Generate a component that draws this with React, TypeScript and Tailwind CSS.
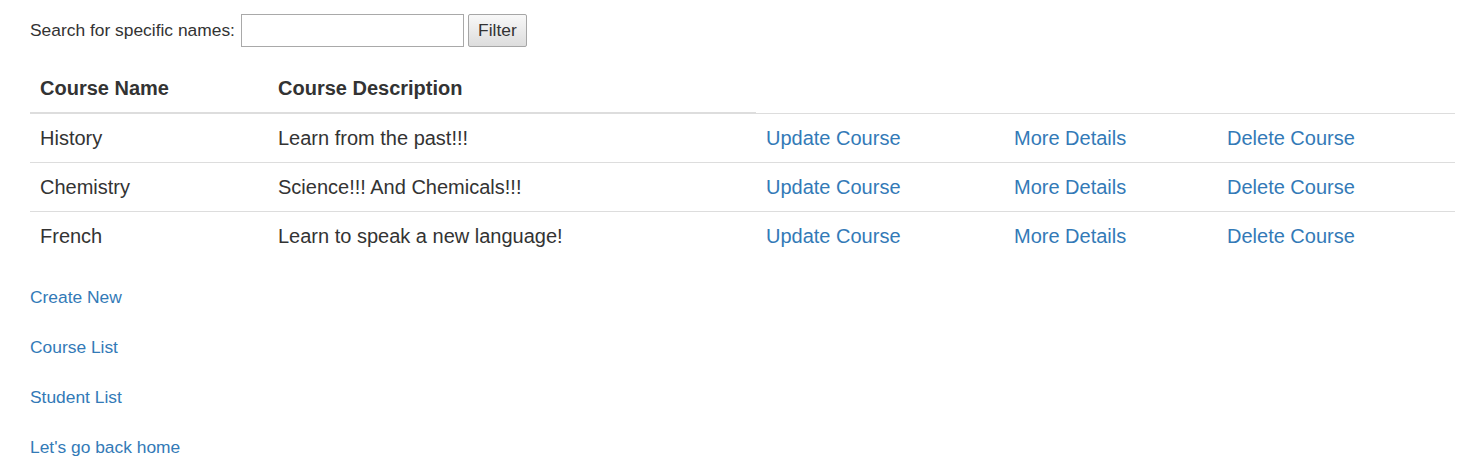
export default function App() {
  const courses = [
    { name: 'History', description: 'Learn from the past!!!' },
    { name: 'Chemistry', description: 'Science!!! And Chemicals!!!' },
    { name: 'French', description: 'Learn to speak a new language!' },
  ];

  const links = ['Create New', 'Course List', 'Student List', "Let's go back home"];

  return (
    <div className="min-h-screen bg-white pl-[30px] pr-[20px] pt-[14px] text-[#333] font-['Liberation_Sans',Arial,sans-serif]">
      <form className="flex items-center h-[33px]" onSubmit={(e) => e.preventDefault()}>
        <label className="text-[17.4px] mr-[6px]">Search for specific names:</label>
        <input
          type="text"
          className="w-[223px] h-[33px] border border-[#a9a9a9] bg-white px-1 text-[17px] outline-none"
        />
        <button
          type="submit"
          className="ml-[4px] w-[59px] h-[33px] border border-[#a6a6a6] rounded-[2px] bg-gradient-to-b from-[#f8f8f8] to-[#dddddd] text-[17.4px] text-[#333]"
        >
          Filter
        </button>
      </form>

      <table className="mt-[17px] w-full border-collapse text-[20px] table-fixed">
        <colgroup>
          <col className="w-[238px]" />
          <col className="w-[488px]" />
          <col className="w-[248px]" />
          <col className="w-[213px]" />
          <col />
        </colgroup>
        <thead>
          <tr>
            <th className="h-[49px] px-[10px] text-left font-bold border-b-2 border-[#ddd] align-middle">
              Course Name
            </th>
            <th className="h-[49px] px-[10px] text-left font-bold border-b-2 border-[#ddd] align-middle">
              Course Description
            </th>
          </tr>
        </thead>
        <tbody>
          {courses.map((c) => (
            <tr key={c.name} className="border-t border-[#ddd]">
              <td className="h-[49px] px-[10px] align-middle">{c.name}</td>
              <td className="h-[49px] px-[10px] align-middle">{c.description}</td>
              <td className="h-[49px] px-[10px] align-middle">
                <a href="#" className="text-[#337ab7]">Update Course</a>
              </td>
              <td className="h-[49px] px-[10px] align-middle">
                <a href="#" className="text-[#337ab7]">More Details</a>
              </td>
              <td className="h-[49px] px-[10px] align-middle">
                <a href="#" className="text-[#337ab7]">Delete Course</a>
              </td>
            </tr>
          ))}
        </tbody>
      </table>

      <div className="mt-[12px]">
        {links.map((l) => (
          <div key={l} className="h-[50px] flex items-center">
            <a href="#" className="text-[17.4px] text-[#337ab7]">{l}</a>
          </div>
        ))}
      </div>
    </div>
  );
}
